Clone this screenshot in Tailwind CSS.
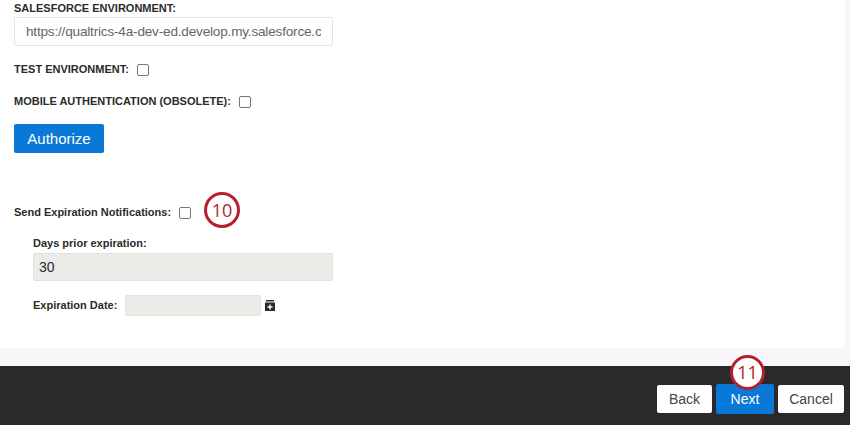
<!DOCTYPE html>
<html lang="en">
  <head>
    <meta charset="UTF-8" />
    <title>Salesforce Authentication</title>
    <script src="https://cdn.jsdelivr.net/npm/@tailwindcss/browser@4"></script>
  </head>
  <body class="h-[425px] w-[850px] overflow-hidden bg-[#f7f7f9] font-['Liberation_Sans',sans-serif] text-[#2b2b2b]">
    <div class="relative flex h-[348px] w-[845px] flex-col bg-white pl-[14px]">
      <label class="mt-px h-[13px] text-[11px] leading-[14px] font-bold">SALESFORCE ENVIRONMENT:</label>
      <div class="mt-[3px] flex h-[29px] w-[319px] items-center overflow-hidden rounded-[2px] border border-[#e4e4e4] pt-px pr-[11px] pl-[11px] text-[13.6px] tracking-[-0.2px] whitespace-nowrap text-[#666]">
        <span class="w-full overflow-hidden">https://qualtrics-4a-dev-ed.develop.my.salesforce.com</span>
      </div>

      <div class="mt-[17px] flex h-[13px] items-center gap-[8px]">
        <span class="text-[11px] font-bold">TEST ENVIRONMENT:</span>
        <span class="h-[12px] w-[12px] rounded-[2px] border border-[#777] bg-white"></span>
      </div>
      <div class="mt-[19px] flex h-[13px] items-center gap-[8px]">
        <span class="text-[11px] font-bold">MOBILE AUTHENTICATION (OBSOLETE):</span>
        <span class="h-[12px] w-[12px] rounded-[2px] border border-[#777] bg-white"></span>
      </div>

      <button class="mt-[16px] h-[29px] w-[90px] rounded-[2px] bg-[#0a78d7] pt-px text-[15px] text-white">Authorize</button>

      <div class="relative mt-[53px] flex h-[13px] items-center gap-[8px]">
        <span class="text-[11px] font-bold">Send Expiration Notifications:</span>
        <span class="h-[12px] w-[12px] rounded-[2px] border border-[#777] bg-white"></span>
        <span class="absolute top-[-14px] left-[190px] flex h-[36px] w-[36px] items-center justify-center rounded-full border-[3px] border-[#b5202f] bg-white font-['Open_Sans',sans-serif] text-[18px] text-[#b5202f]">10</span>
      </div>

      <div class="mt-[18px] ml-[19px] flex flex-col">
        <label class="h-[13px] text-[11px] leading-[13px] font-bold">Days prior expiration:</label>
        <div class="mt-[3px] flex h-[28px] w-[300px] items-center rounded-[2px] border border-[#e2e2dc] bg-[#ebebe8] pt-px pl-[5px] text-[14px]">30</div>
        <div class="mt-[14px] flex h-[21px] items-center">
          <span class="w-[92px] text-[11px] font-bold">Expiration Date:</span>
          <span class="h-[21px] w-[136px] rounded-[2px] border border-[#e2e2dc] bg-[#ebebe8]"></span>
          <svg class="ml-[4px]" width="10" height="11" viewBox="0 0 10 11">
            <path fill="#2b2b2b" d="M1 0h8v1.500H1zM0 2.500h10V11H0z" />
            <path fill="#fff" d="M4.300 4.500h1.400v1.800h1.800v1.400H5.700v1.800H4.300V7.700H2.500V6.300h1.800z" />
          </svg>
        </div>
      </div>
    </div>

    <div class="relative mt-[18px] flex h-[59px] items-start justify-end gap-[4px] bg-[#2a2a2a] pt-[19px] pr-[6px] text-[14px]">
      <button class="h-[28px] w-[55px] rounded-[2px] bg-white text-[#444]">Back</button>
      <button class="-mt-px h-[30px] w-[58px] rounded-[2px] bg-[#0a78d7] text-white">Next</button>
      <button class="h-[28px] w-[66px] rounded-[2px] bg-white text-[#444]">Cancel</button>
      <span class="absolute top-[-11px] left-[730px] flex h-[35px] w-[35px] items-center justify-center rounded-full border-[3px] border-[#b5202f] bg-white font-['Open_Sans',sans-serif] text-[18px] text-[#b5202f]">11</span>
    </div>
  </body>
</html>
